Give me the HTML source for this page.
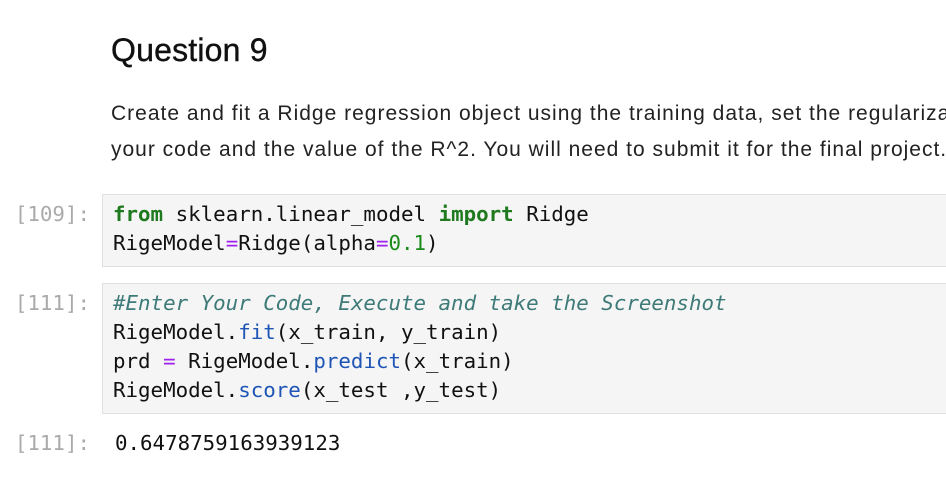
<!DOCTYPE html>
<html><head><meta charset="utf-8"><style>
html,body{margin:0;width:946px;height:490px;overflow:hidden}
body{background:#fff;position:relative;font-family:"Liberation Sans",sans-serif;color:#111}
.h{position:absolute;left:111px;top:32px;font-size:32px;letter-spacing:0.2px;-webkit-text-stroke:0.4px #111}
.p{position:absolute;left:111px;top:96px;width:835px;overflow:hidden;font-size:21px;letter-spacing:1px;line-height:36px;white-space:nowrap;color:#222}
.box{position:absolute;left:102px;width:844px;background:#f5f5f5;border:1px solid #e0e0e0;border-right:none;box-sizing:border-box}
.code{position:absolute;left:113px;font-family:"DejaVu Sans Mono",monospace;font-size:20.8px;line-height:29px;white-space:pre;color:#111}
.pr{position:absolute;right:856px;font-family:"DejaVu Sans Mono",monospace;font-size:20.8px;line-height:29px;color:#aaa;white-space:pre}
.k{color:#1f7a1f;font-weight:bold}.o{color:#a020f0}.n{color:#1a8a1a}.c{color:#3d7a78;font-style:italic}.f{color:#1f55b5}
</style></head><body>
<div class="h">Question 9</div>
<div class="p">Create and fit a Ridge regression object using the training data, set the regularization parameter to 0.1<br>your code and the value of the R^2. You will need to submit it for the final project.</div>
<div class="box" style="top:194px;height:73px"></div>
<div class="pr" style="top:200px">[109]:</div>
<div class="code" style="top:200px"><span class="k">from</span> sklearn.linear_model <span class="k">import</span> Ridge
RigeModel<span class="o">=</span>Ridge(alpha<span class="o">=</span><span class="n">0.1</span>)</div>
<div class="box" style="top:283px;height:131px"></div>
<div class="pr" style="top:289px">[111]:</div>
<div class="code" style="top:289px"><span class="c">#Enter Your Code, Execute and take the Screenshot</span>
RigeModel.<span class="f">fit</span>(x_train, y_train)
prd <span class="o">=</span> RigeModel.<span class="f">predict</span>(x_train)
RigeModel.<span class="f">score</span>(x_test ,y_test)</div>
<div class="pr" style="top:429px">[111]:</div>
<div class="code" style="top:429px;left:115px">0.6478759163939123</div>
</body></html>
